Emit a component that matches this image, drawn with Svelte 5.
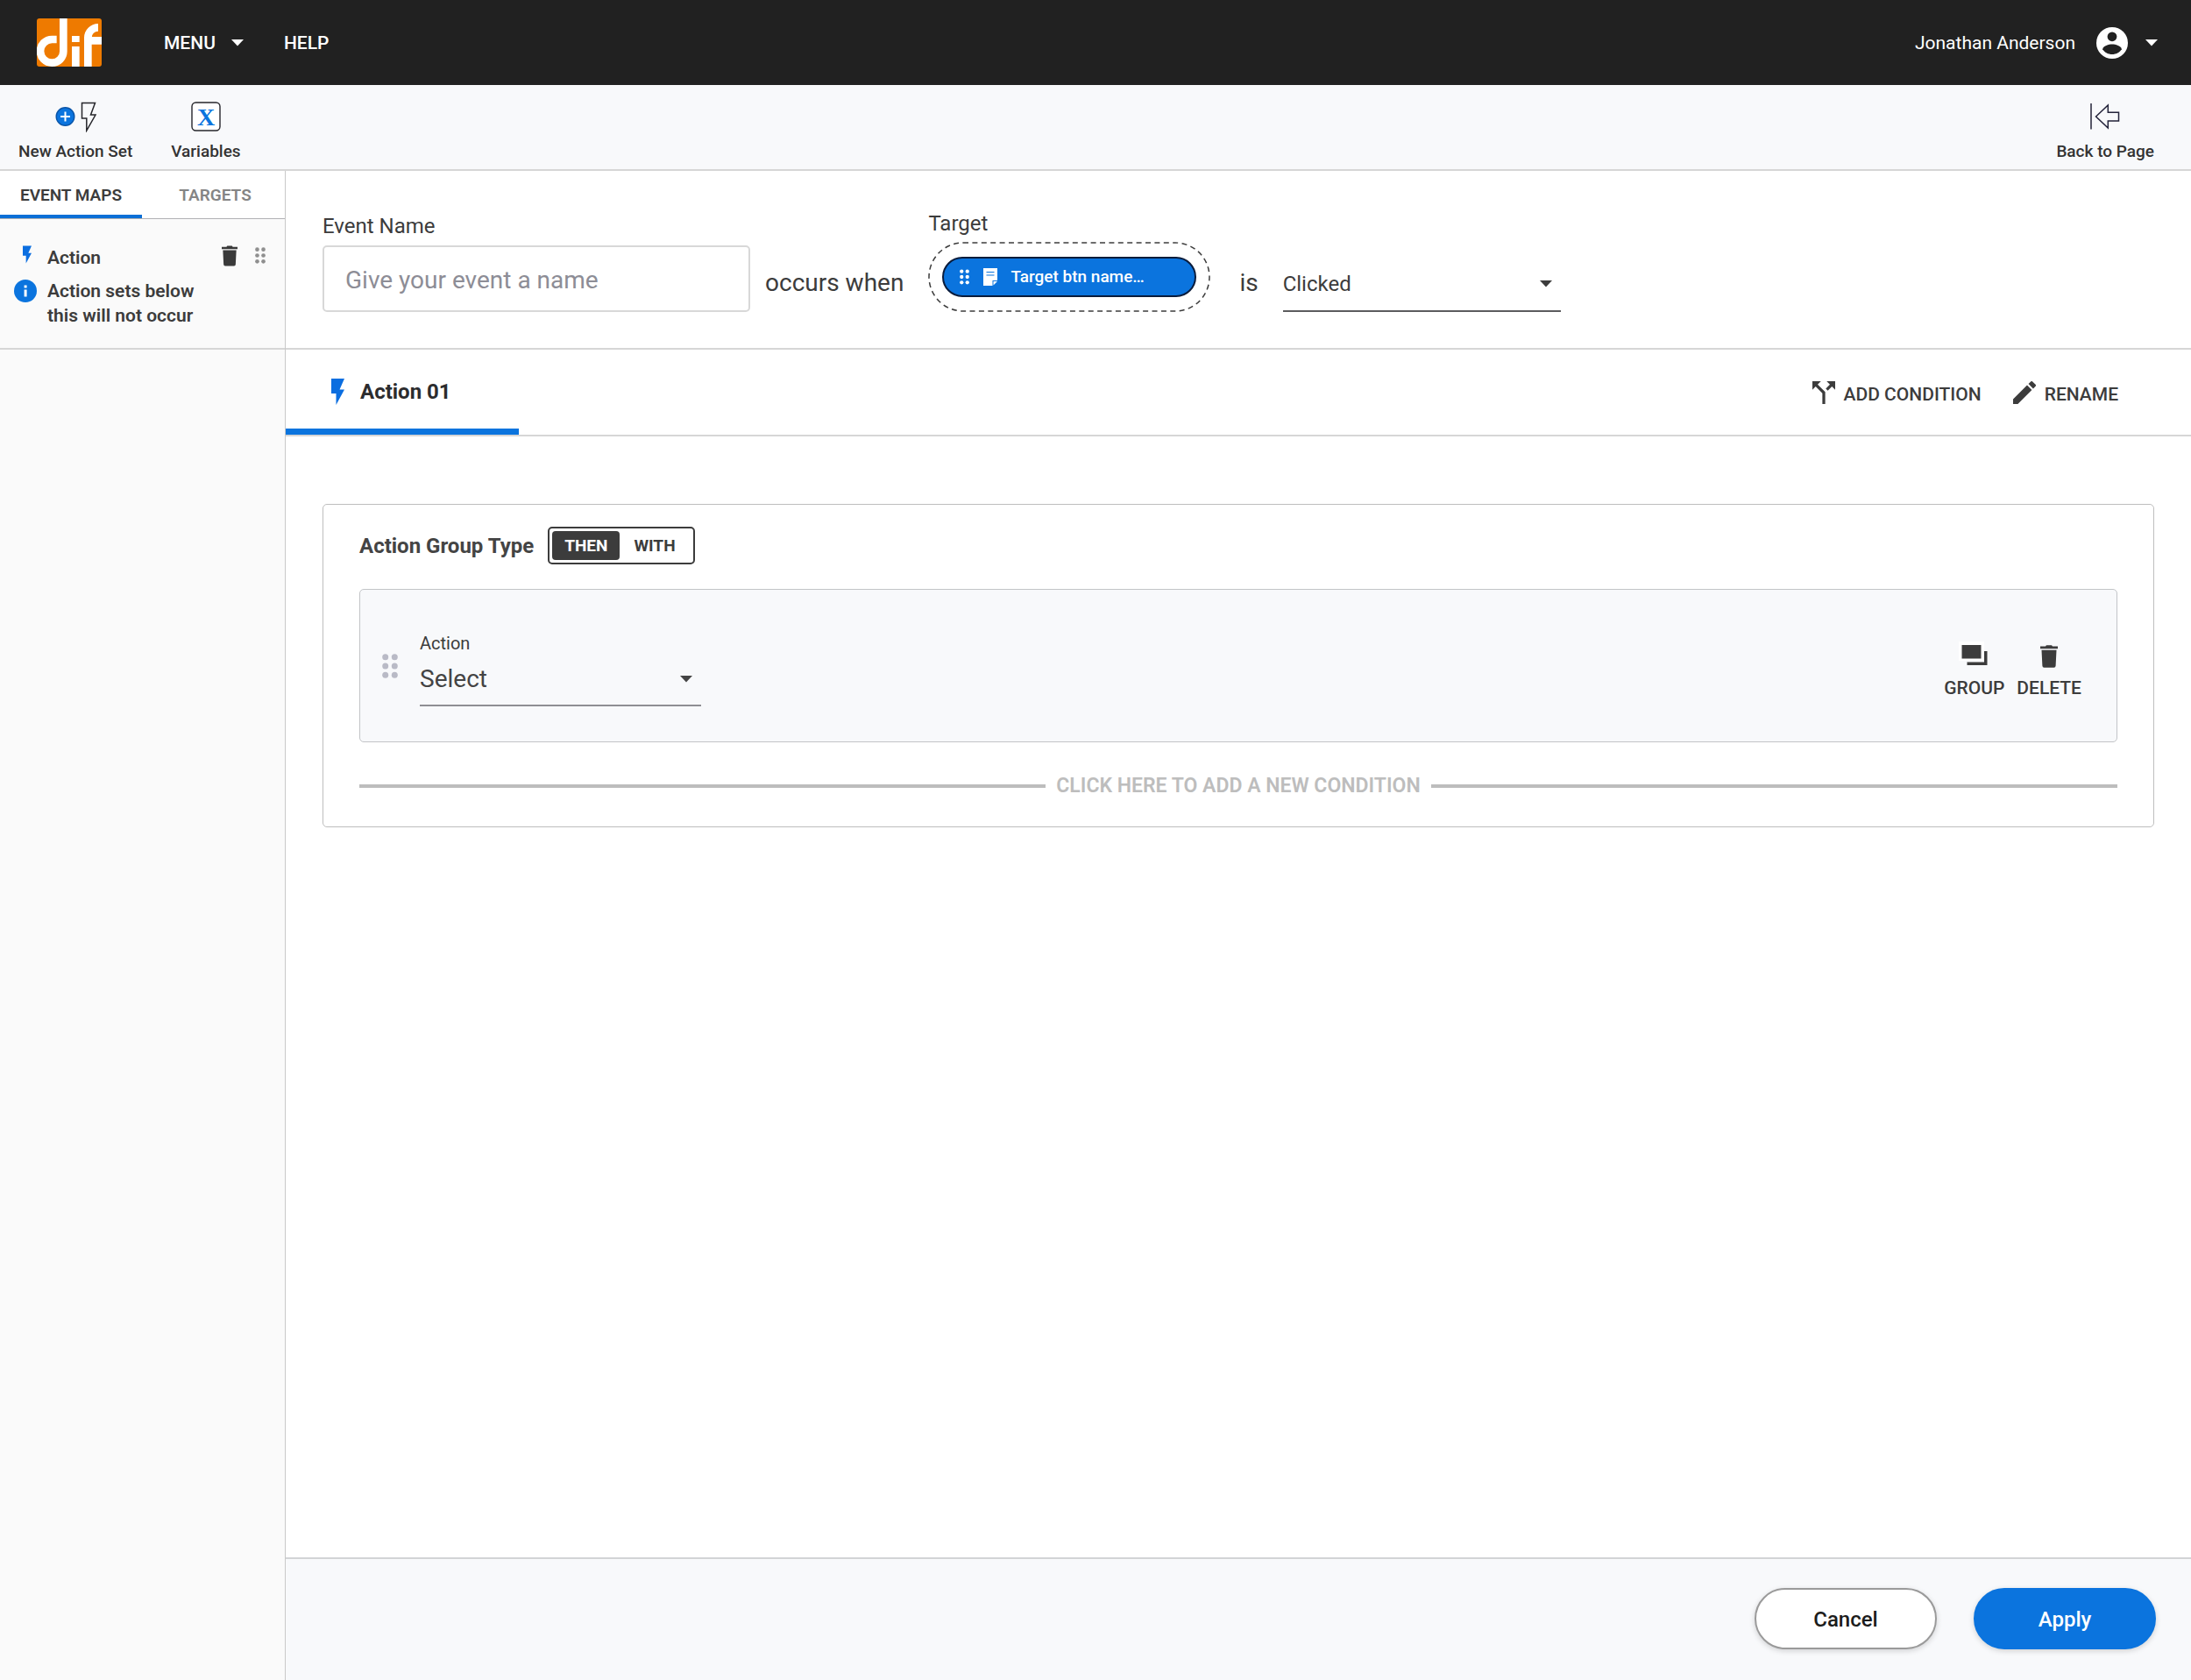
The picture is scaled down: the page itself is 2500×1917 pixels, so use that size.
<script lang="ts">
  let eventName = $state('');
  let trigger = $state('Clicked');
  let action = $state('Select');
  let groupType = $state('THEN');
</script>

{#snippet caret()}
  <svg class="caret" viewBox="0 0 14 8" aria-hidden="true"><path d="M0 0h14L7 7.5z" fill="currentColor" /></svg>
{/snippet}

{#snippet dots()}
  <svg class="dots" viewBox="0 0 18 28" aria-hidden="true" fill="currentColor">
    <circle cx="3.7" cy="3.7" r="3.5" /><circle cx="14.3" cy="3.7" r="3.5" />
    <circle cx="3.7" cy="14" r="3.5" /><circle cx="14.3" cy="14" r="3.5" />
    <circle cx="3.7" cy="24.3" r="3.5" /><circle cx="14.3" cy="24.3" r="3.5" />
  </svg>
{/snippet}

{#snippet trash()}
  <svg class="trash" viewBox="0 0 20 26" aria-hidden="true" fill="currentColor">
    <path d="M0 1.5h6L7 .3h6l1 1.2h6v2.8H0zM1.5 5.800h17l-.9 18q-.1 2-2 2H4.400q-1.900 0-2-2z" />
  </svg>
{/snippet}

{#snippet bolt()}
  <svg class="bolt" viewBox="0 0 15 30" aria-hidden="true"><path d="M0 0h15l-5.500 12.500H15L5.500 30V17H0z" fill="currentColor" /></svg>
{/snippet}

<div class="page">
  <header class="topbar">
    <a class="logo" href="#home" aria-label="dif">
      <svg viewBox="0 0 222 165" aria-hidden="true">
        <rect width="222" height="165" rx="9" fill="#ee7a00" />
        <g fill="none" stroke="#fff" stroke-width="26">
          <path d="M68 72H52A40 40 0 0 0 52 152A39 39 0 0 0 91 113V0" />
          <path d="M133 60v21M133 96v69M175 165V66A35 35 0 0 1 210 31M180 76h42" />
        </g>
      </svg>
    </a>
    <nav class="menu">
      <button type="button">MENU {@render caret()}</button>
      <button type="button">HELP</button>
    </nav>
    <button type="button" class="user">
      <span>Jonathan Anderson</span>
      <svg class="avatar" viewBox="2 2 20 20" aria-hidden="true">
        <path fill="#fff" d="M12 2a10 10 0 1 0 0 20 10 10 0 0 0 0-20z" />
        <circle cx="12" cy="8" r="3" fill="#212121" />
        <path fill="#212121" d="M6 16c0-2 4-3.100 6-3.100s6 1.100 6 3.100c-1.300 2-3.500 3.200-6 3.200S7.300 18 6 16z" />
      </svg>
      {@render caret()}
    </button>
  </header>

  <div class="toolbar">
    <button type="button" class="tool">
      <svg class="new-set" viewBox="0 0 48 36" aria-hidden="true">
        <circle cx="12.500" cy="18" r="10.300" fill="#0b74de" stroke="#0a55a8" stroke-width="1.400" />
        <path d="M12.500 12.500v11M7 18h11" stroke="#fff" stroke-width="2" />
        <path d="M31.500 2.500h15L41.500 16h5.500L36.800 34V20h-5.300z" fill="none" stroke="#26262b" stroke-width="1.500" />
      </svg>
      <span>New Action Set</span>
    </button>
    <button type="button" class="tool">
      <svg class="variable" viewBox="0 0 36 36" aria-hidden="true">
        <rect x="2" y="2" width="32" height="32" rx="4.500" fill="#fff" stroke="#26262b" stroke-width="1.400" />
        <text x="18" y="27.500" text-anchor="middle">X</text>
      </svg>
      <span>Variables</span>
    </button>
    <button type="button" class="tool back">
      <svg class="exit" viewBox="0 0 36 36" aria-hidden="true" fill="none" stroke="#23233a" stroke-width="1.500">
        <path d="M2 3v29.500M7.500 18L21.300 5v8.200h12.200v9.800H21.300v8z" />
      </svg>
      <span>Back to Page</span>
    </button>
  </div>

  <div class="body">
    <aside class="sidebar">
      <div class="side-tabs" role="tablist">
        <button type="button" role="tab" aria-selected="true" class="active">EVENT MAPS</button>
        <button type="button" role="tab" aria-selected="false">TARGETS</button>
      </div>
      <div class="entry">
        <div class="entry-head">
          <span class="lead">{@render bolt()}</span>
          <strong>Action</strong>
          <button type="button" class="entry-delete" aria-label="Delete">{@render trash()}</button>
          <button type="button" class="entry-drag" aria-label="Drag">{@render dots()}</button>
        </div>
        <div class="note">
          <svg class="info" viewBox="0 0 26 26" aria-hidden="true">
            <circle cx="13" cy="13" r="13" fill="#0b74de" />
            <path d="M11.600 6.500h3v3h-3zM11.600 11.500h3v8h-3z" fill="#fff" />
          </svg>
          <p>Action sets below<br />this will not occur</p>
        </div>
      </div>
    </aside>

    <main>
      <section class="event">
        <div class="field name">
          <label for="event-name">Event Name</label>
          <input id="event-name" type="text" placeholder="Give your event a name" bind:value={eventName} />
        </div>
        <span class="joiner">occurs when</span>
        <div class="field target">
          <span class="label">Target</span>
          <div class="drop">
            <svg class="outline" aria-hidden="true"><rect rx="39" /></svg>
            <button type="button" class="chip">
              {@render dots()}
              <svg class="doc" viewBox="0 0 16 20" aria-hidden="true">
                <path d="M0 0h16v14h-5.500v6H0z" fill="#fff" /><path d="M11.500 19.500V15H16z" fill="#fff" />
                <path d="M3.500 4.500h9M3.500 8h9" stroke="#0b74de" stroke-width="1.200" />
              </svg>
              <span>Target btn name…</span>
            </button>
          </div>
        </div>
        <span class="joiner is">is</span>
        <div class="select trigger">
          <select aria-label="Trigger" bind:value={trigger}>
            <option>Clicked</option>
            <option>Hovered</option>
          </select>
          {@render caret()}
        </div>
      </section>

      <section class="action-bar">
        <button type="button" class="action-tab">{@render bolt()}<span>Action 01</span></button>
        <div class="commands">
          <button type="button">
            <svg class="split" viewBox="4 4 16 16" aria-hidden="true" fill="currentColor">
              <path d="M14 4l2.290 2.290-2.880 2.880 1.420 1.420 2.880-2.880L20 10V4zM10 4H4v6l2.290-2.290 4.710 4.700V20h2v-8.410l-5.290-5.300z" />
            </svg>
            ADD CONDITION
          </button>
          <button type="button">
            <svg class="pencil" viewBox="3 3 18 18" aria-hidden="true" fill="currentColor">
              <path d="M3 17.250V21h3.750L17.810 9.940l-3.750-3.750zM20.710 7.040a1 1 0 0 0 0-1.410l-2.340-2.340a1 1 0 0 0-1.410 0l-1.830 1.830 3.750 3.750z" />
            </svg>
            RENAME
          </button>
        </div>
      </section>

      <section class="canvas">
        <div class="group">
          <div class="group-head">
            <h2 id="group-type">Action Group Type</h2>
            <div class="toggle" role="radiogroup" aria-labelledby="group-type">
              {#each ['THEN', 'WITH'] as option}
                <label class:on={groupType === option}>
                  <input type="radio" name="group-type" value={option} bind:group={groupType} />
                  {option}
                </label>
              {/each}
            </div>
          </div>

          <div class="row">
            <button type="button" class="row-drag" aria-label="Drag">{@render dots()}</button>
            <div class="row-field">
              <label for="action">Action</label>
              <div class="select action">
                <select id="action" bind:value={action}>
                  <option>Select</option>
                  <option>Navigate</option>
                </select>
                {@render caret()}
              </div>
            </div>
            <div class="row-tools">
              <button type="button">
                <svg class="stack" viewBox="0 0 36 30" aria-hidden="true">
                  <path d="M0 0h29v22H0z" fill="#fff" />
                  <path d="M3.500 4h22v15.500h-22zM29 11h3.500v16H9.500v-3.500H29z" fill="currentColor" />
                </svg>
                GROUP
              </button>
              <button type="button">
                {@render trash()}
                DELETE
              </button>
            </div>
          </div>

          <button type="button" class="add">CLICK HERE TO ADD A NEW CONDITION</button>
        </div>
      </section>

      <footer>
        <button type="button" class="pill">Cancel</button>
        <button type="button" class="pill primary">Apply</button>
      </footer>
    </main>
  </div>
</div>

<style>
  :global(body) {
    margin: 0;
    background: #fff;
  }

  .page {
    display: flex;
    flex-direction: column;
    min-height: 100vh;
    font-family: Roboto, 'Liberation Sans', sans-serif;
    font-size: 21px;
    line-height: 24px;
    color: #3c3c3c;
  }

  .page *,
  .page {
    box-sizing: border-box;
  }

  button,
  input,
  select {
    margin: 0;
    padding: 0;
    border: 0;
    background: none;
    color: inherit;
    font: inherit;
    cursor: pointer;
  }

  svg {
    display: block;
    flex: none;
  }

  .caret {
    width: 14px;
    height: 8px;
  }

  .trash {
    width: 20px;
    height: 26px;
  }

  .dots {
    width: 18px;
    height: 28px;
  }

  .bolt {
    color: #0b6ee0;
  }

  /* Top bar */
  .topbar {
    display: flex;
    align-items: center;
    height: 97px;
    padding: 0 38px 0 42px;
    background: #212121;
    color: #fff;
  }

  .logo svg {
    width: 74px;
    height: 55px;
  }

  .menu {
    display: flex;
    gap: 46px;
    margin-left: 71px;
    font-weight: 500;
  }

  .menu button {
    display: flex;
    align-items: center;
    gap: 18px;
  }

  .user {
    display: flex;
    align-items: center;
    margin-left: auto;
  }

  .avatar {
    width: 36px;
    height: 36px;
    margin: 0 20px 0 24px;
  }

  /* Toolbar */
  .toolbar {
    display: flex;
    gap: 44px;
    height: 98px;
    padding: 18px 42px 0 21px;
    background: #f8f9fb;
    border-bottom: 2px solid #d6d6d6;
  }

  .tool {
    display: flex;
    flex-direction: column;
    align-items: center;
    gap: 10px;
    height: 70px;
    font-size: 19px;
    font-weight: 500;
    color: #333;
  }

  .back {
    margin-left: auto;
  }

  .new-set {
    width: 48px;
    height: 36px;
  }

  .variable,
  .exit {
    width: 36px;
    height: 36px;
  }

  .variable text {
    font: bold 28px 'Liberation Serif', serif;
    fill: #0b74de;
  }

  /* Sidebar */
  .body {
    display: flex;
    flex: 1;
  }

  .sidebar {
    flex: none;
    width: 326px;
    background: #fafafa;
    border-right: 1px solid #c9c9c9;
  }

  .side-tabs {
    display: grid;
    grid-template-columns: 162px 1fr;
    height: 55px;
    background: #fff;
    border-bottom: 1px solid #b0b0b4;
    font-size: 19px;
  }

  .side-tabs button {
    padding: 6px 0 0 4px;
    border-bottom: 4px solid transparent;
    font-weight: 600;
    color: #858585;
  }

  .side-tabs .active {
    padding-left: 0;
    border-bottom-color: #0b6fd6;
    color: #3c3c3c;
  }

  .entry {
    height: 149px;
    padding: 30px 22px 0 16px;
    border-bottom: 2px solid #d6d6d6;
    line-height: 28px;
  }

  .entry-head {
    display: flex;
    align-items: flex-start;
    margin-bottom: 10px;
  }

  .entry-head strong {
    font-weight: 600;
  }

  .lead {
    width: 38px;
    padding-left: 10px;
  }

  .lead .bolt {
    width: 10px;
    height: 21px;
  }

  .entry-delete {
    margin-left: auto;
    color: #3a3a3a;
  }

  .entry-delete .trash {
    width: 18px;
    height: 24px;
  }

  .entry-drag {
    margin: 2px 0 0 20px;
    color: #8f8f8f;
  }

  .entry-drag .dots {
    width: 12px;
    height: 19px;
  }

  .note {
    display: flex;
    gap: 12px;
  }

  .note p {
    margin: 0;
    font-weight: 600;
  }

  .info {
    width: 26px;
    height: 28px;
  }

  /* Event sentence */
  main {
    display: flex;
    flex: 1;
    flex-direction: column;
    min-width: 0;
  }

  .event {
    display: flex;
    align-items: flex-end;
    height: 204px;
    padding: 0 42px 41px;
    border-bottom: 2px solid #d6d6d6;
  }

  .field {
    display: flex;
    flex-direction: column;
    font-size: 24px;
  }

  .name {
    gap: 10px;
    width: 488px;
  }

  .name input {
    height: 76px;
    padding: 3px 24px 0;
    border: 2px solid #d8d8d8;
    border-radius: 5px;
    font-size: 28px;
    cursor: text;
  }

  .name input::placeholder {
    color: #8d8d96;
    opacity: 1;
  }

  .joiner {
    padding-bottom: 21px;
    margin-left: 17px;
    font-size: 28px;
  }

  .target {
    gap: 9px;
    width: 322px;
    margin-left: 28px;
  }

  .drop {
    position: relative;
    display: flex;
    height: 80px;
    padding: 17px 16px;
  }

  .outline {
    position: absolute;
    inset: 0;
    width: 100%;
    height: 100%;
  }

  .outline rect {
    x: 1px;
    y: 1px;
    width: calc(100% - 2px);
    height: calc(100% - 2px);
    fill: none;
    stroke: #3c3c3c;
    stroke-width: 1.5px;
    stroke-dasharray: 6 4.400;
  }

  .chip {
    position: relative;
    display: flex;
    flex: 1;
    align-items: center;
    height: 46px;
    padding: 0 18px;
    border: 2px solid #0a1c3c;
    border-radius: 23px;
    background: #0b74de;
    color: #fff;
    font-size: 19px;
    font-weight: 500;
  }

  .chip .dots {
    width: 11px;
    height: 18px;
  }

  .doc {
    width: 16px;
    height: 20px;
    margin: 0 15px 0 16px;
  }

  .is {
    margin-left: 33px;
  }

  .select {
    display: grid;
    align-items: center;
    border-bottom: 2px solid #5c5c5e;
  }

  .select select,
  .select .caret {
    grid-area: 1 / 1;
  }

  .select select {
    appearance: none;
    width: 100%;
    height: 100%;
    outline-offset: 2px;
  }

  .select .caret {
    justify-self: end;
    margin-right: 10px;
    pointer-events: none;
  }

  .trigger {
    width: 317px;
    height: 62px;
    margin-left: 28px;
    font-size: 24px;
  }

  /* Action tab strip */
  .action-bar {
    display: flex;
    justify-content: space-between;
    height: 99px;
    border-bottom: 2px solid #d6d6d6;
  }

  .action-tab {
    display: flex;
    align-items: center;
    gap: 18px;
    width: 266px;
    padding: 5px 0 0 52px;
    border-bottom: 7px solid #0b74de;
    font-size: 24px;
    font-weight: 700;
    color: #2c2c2e;
  }

  .action-tab .bolt {
    width: 15px;
    height: 30px;
  }

  .commands {
    display: flex;
    gap: 36px;
    padding: 5px 83px 0 0;
    font-weight: 500;
  }

  .commands button {
    display: flex;
    align-items: center;
    gap: 10px;
  }

  .commands svg {
    margin-bottom: 5px;
  }

  .split,
  .pencil {
    width: 26px;
    height: 26px;
  }

  /* Action group card */
  .canvas {
    flex: 1;
    padding: 77px 42px;
  }

  .group {
    padding: 25px 41px 32px;
    border: 1px solid #bebebe;
    border-radius: 5px;
  }

  .group-head {
    display: flex;
    align-items: center;
    gap: 16px;
    margin-bottom: 28px;
  }

  .group-head h2 {
    margin: 0;
    font-size: 24px;
    font-weight: 700;
    color: #444;
  }

  .toggle {
    display: flex;
    gap: 2px;
    height: 43px;
    padding: 3px;
    border: 2px solid #3c3c3c;
    border-radius: 5px;
    font-size: 19px;
    font-weight: 700;
  }

  .toggle label {
    display: flex;
    align-items: center;
    padding: 0 14px;
    border-radius: 4px;
    cursor: pointer;
  }

  .toggle label:last-child {
    padding-right: 17px;
  }

  .toggle label.on {
    background: #3c3c3c;
    color: #fff;
  }

  .toggle input {
    appearance: none;
    width: 0;
    height: 0;
  }

  .row {
    display: flex;
    align-items: center;
    height: 175px;
    padding: 0 40px 0 25px;
    border: 1px solid #c2c4c7;
    border-radius: 5px;
    background: #f8f9fb;
  }

  .row-drag {
    color: #b9bac6;
  }

  .row-field {
    display: flex;
    flex-direction: column;
    width: 321px;
    padding-top: 8px;
    margin-left: 25px;
    font-size: 20px;
  }

  .row-field .select {
    height: 60px;
    border-bottom-color: #8f8f93;
    font-size: 28px;
    color: #444;
  }

  .row-tools {
    display: flex;
    gap: 14px;
    padding-top: 10px;
    margin-left: auto;
    font-weight: 500;
  }

  .row-tools button {
    display: flex;
    flex-direction: column;
    align-items: center;
    justify-content: flex-end;
    gap: 11px;
  }

  .stack {
    width: 36px;
    height: 30px;
  }

  .add {
    display: flex;
    align-items: center;
    gap: 12px;
    width: 100%;
    margin-top: 36px;
    font-size: 23px;
    line-height: 28px;
    font-weight: 600;
    color: #bdbdbd;
  }

  .add::before,
  .add::after {
    content: '';
    flex: 1;
    height: 4px;
    background: #bdbdbd;
  }

  /* Footer */
  footer {
    display: flex;
    justify-content: flex-end;
    gap: 42px;
    height: 140px;
    padding: 33px 40px 0;
    background: #f8f9fb;
    border-top: 2px solid #d2d4d6;
  }

  .pill {
    width: 208px;
    height: 70px;
    padding-top: 2px;
    border: 2px solid #9a9a9a;
    border-radius: 35px;
    background: #fff;
    color: #1c1c1c;
    font-size: 24px;
    font-weight: 500;
    box-shadow: 0 2px 6px rgba(0, 0, 0, 0.16);
  }

  .primary {
    border-color: #0b74de;
    background: #0b74de;
    color: #fff;
  }
</style>
